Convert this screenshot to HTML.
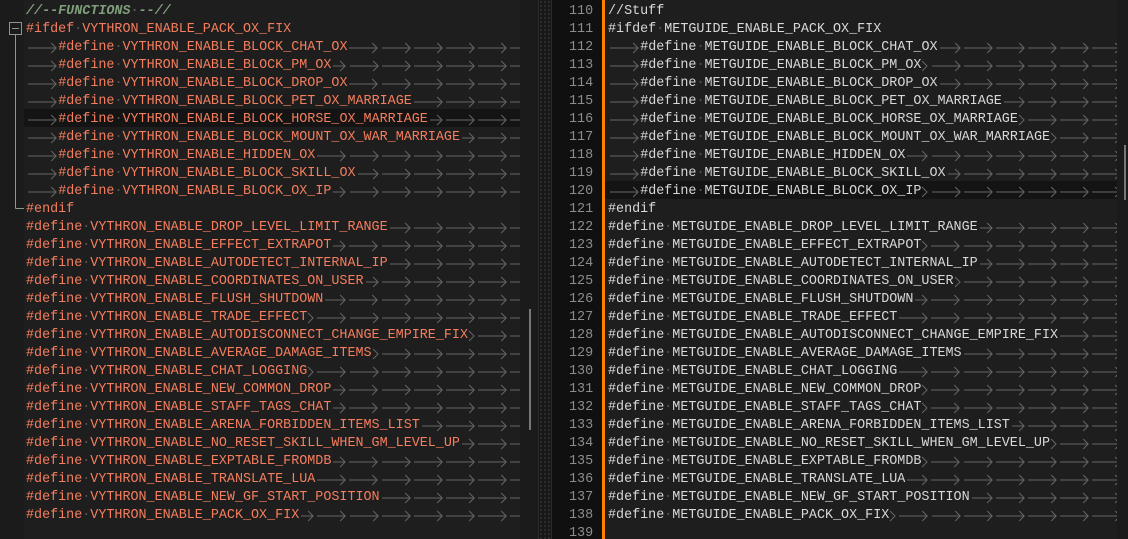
<!DOCTYPE html>
<html><head><meta charset="utf-8">
<style>
*{margin:0;padding:0;box-sizing:border-box}
body{width:1128px;height:539px;overflow:hidden;background:#1e1e1e;position:relative;font-family:"Liberation Mono",monospace;font-size:13.4px}
.pane{position:absolute;top:0;height:539px;overflow:hidden}
.row{position:absolute;left:0;height:18px;line-height:18px;white-space:pre;display:flex;align-items:flex-start}
.row span{display:block;height:18px;line-height:18px;position:relative;top:2px}
.row span.d{display:inline;position:static}
.row svg{display:block;flex:none}
.o{color:#f57e5e}
.w{color:#d8d8d8}
.d{color:#555}
.c{color:#7f9f7a;font-weight:bold;font-style:italic}
.ln{position:absolute;right:0;width:48px;text-align:left;color:#8c8c8c;height:18px;line-height:18px;padding-left:15px}
</style></head><body>
<div class="pane" style="left:0;width:24px;background:#1b1b1b"></div>
<div class="pane" id="L" style="left:24px;width:496px"></div>
<div class="pane" style="left:520px;width:18px;background:#1b1b1b"></div>
<div style="position:absolute;left:529px;top:309px;width:2px;height:121px;background:#777"></div>
<div class="pane" style="left:538px;width:14px;background:#181818;border-left:1px solid #2a2a2a;border-right:1px solid #2a2a2a;background-image:radial-gradient(#333 0.8px,transparent 1px);background-size:4px 4px"></div>
<div class="pane" id="G" style="left:552px;width:50px;background:#101010"></div>
<div class="pane" style="left:602px;width:3px;background:#ff8000"></div>
<div class="pane" id="R" style="left:605px;width:512px"></div>
<div class="pane" style="left:1117px;width:11px;background:#1b1b1b"></div>
<div style="position:absolute;left:1124px;top:145px;width:2px;height:55px;background:#777"></div>
<svg style="position:absolute;left:0;top:0" width="24" height="539">
<rect x="9.5" y="22.5" width="12" height="12" fill="#1b1b1b" stroke="#8a9a8a"/>
<line x1="12" y1="28.5" x2="19" y2="28.5" stroke="#8a9a8a"/>
<line x1="15.5" y1="35" x2="15.5" y2="208.5" stroke="#8a9a8a"/>
<line x1="15.5" y1="208.5" x2="24" y2="208.5" stroke="#8a9a8a"/>
</svg>
<script>
var CW=8.05;
var names=["ENABLE_BLOCK_CHAT_OX","ENABLE_BLOCK_PM_OX","ENABLE_BLOCK_DROP_OX","ENABLE_BLOCK_PET_OX_MARRIAGE","ENABLE_BLOCK_HORSE_OX_MARRIAGE","ENABLE_BLOCK_MOUNT_OX_WAR_MARRIAGE","ENABLE_HIDDEN_OX","ENABLE_BLOCK_SKILL_OX","ENABLE_BLOCK_OX_IP"];
var names2=["ENABLE_DROP_LEVEL_LIMIT_RANGE","ENABLE_EFFECT_EXTRAPOT","ENABLE_AUTODETECT_INTERNAL_IP","ENABLE_COORDINATES_ON_USER","ENABLE_FLUSH_SHUTDOWN","ENABLE_TRADE_EFFECT","ENABLE_AUTODISCONNECT_CHANGE_EMPIRE_FIX","ENABLE_AVERAGE_DAMAGE_ITEMS","ENABLE_CHAT_LOGGING","ENABLE_NEW_COMMON_DROP","ENABLE_STAFF_TAGS_CHAT","ENABLE_ARENA_FORBIDDEN_ITEMS_LIST","ENABLE_NO_RESET_SKILL_WHEN_GM_LEVEL_UP","ENABLE_EXPTABLE_FROMDB","ENABLE_TRANSLATE_LUA","ENABLE_NEW_GF_START_POSITION","ENABLE_PACK_OX_FIX"];
function arrow(cols){
  var w=cols*CW;
  var s='<svg width="'+w.toFixed(2)+'" height="18">';
  if(cols>1)s+='<line x1="2" y1="11" x2="'+(w-2)+'" y2="11" stroke="#666"/>';
  s+='<polyline points="'+(w-7)+',6 '+(w-2)+',11 '+(w-7)+',16" fill="none" stroke="#666"/>';
  return s+'</svg>';
}
function build(id,P,cls,first,hl,width){
  var el=document.getElementById(id),h='';
  var lines=[];
  lines.push({t:first,k:'cm'});
  lines.push({t:'#ifdef '+P+'ENABLE_PACK_OX_FIX',k:'pl'});
  names.forEach(function(n){lines.push({t:'#define '+P+n,k:'def',ind:1});});
  lines.push({t:'#endif',k:'pl'});
  names2.forEach(function(n){lines.push({t:'#define '+P+n,k:'def'});});
  var maxc=Math.ceil(width/CW)+4;
  lines.forEach(function(L,i){
    var bg=(i==hl)?'background:#141414;':'';
    var s='<div class="row" style="top:'+(1+18*i)+'px;width:'+width+'px;'+bg+'padding-left:'+(id=='L'?2:3)+'px">';
    var c=0;
    if(L.ind){s+=arrow(4);c=4;}
    var tc=L.k=='cm'?(id=='L'?'c':'w'):cls;
    var txt=L.t.replace(/ /g,'<span class="d">·</span>');
    s+='<span class="'+tc+'">'+txt+'</span>';
    c+=L.t.length;
    if(L.k=='def'){
      while(c<maxc){var n=4-(c%4);s+=arrow(n);c+=n;}
    }
    s+='</div>';h+=s;
  });
  el.innerHTML=h;
}
build('L','VYTHRON_','o','//--FUNCTIONS --//',6,496);
build('R','METGUIDE_','w','//Stuff',10,512);
var g='';
for(var i=0;i<30;i++){g+='<div class="ln" style="top:'+(3+18*i)+'px">'+(110+i)+'</div>';}
document.getElementById('G').innerHTML=g;
</script>
</body></html>
